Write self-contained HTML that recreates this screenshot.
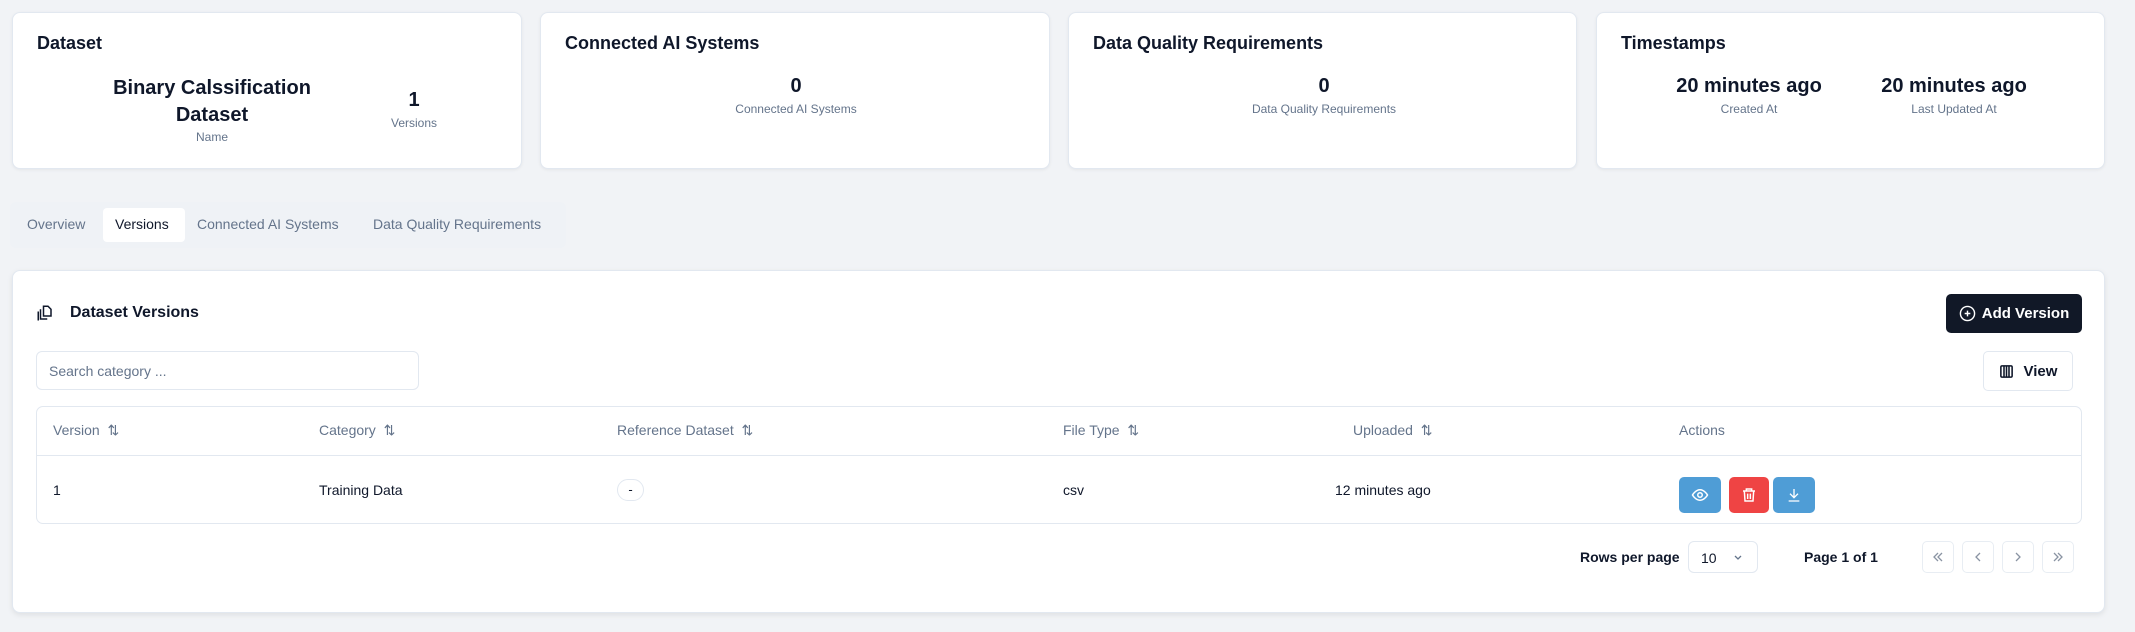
<!DOCTYPE html>
<html><head><meta charset="utf-8">
<style>
*{box-sizing:border-box;margin:0;padding:0}
body{width:2135px;height:632px;background:#f1f3f6;font-family:"Liberation Sans",sans-serif;color:#0f172a;position:relative;overflow:hidden}
.abs{position:absolute}
.card{position:absolute;top:12px;height:157px;background:#fff;border:1px solid #e2e8f0;border-radius:8px;box-shadow:0 1px 3px rgba(0,0,0,.06)}
.ct{position:absolute;left:24px;top:20px;font-size:18px;font-weight:bold}
.val{position:absolute;font-size:20px;font-weight:bold;text-align:center;transform:translateX(-50%);white-space:nowrap}
.lab{position:absolute;font-size:12px;color:#64748b;text-align:center;transform:translateX(-50%);white-space:nowrap}
.tab{position:absolute;top:216px;font-size:14px;color:#64748b}
.th{position:absolute;top:422px;font-size:14px;color:#64748b;white-space:nowrap}
.td{position:absolute;top:482px;font-size:14px;white-space:nowrap}
.btn{position:absolute;border-radius:5px;display:flex;align-items:center;justify-content:center}
.pg{position:absolute;top:541px;width:32px;height:32px;border:1px solid #e8edf3;border-radius:5px;display:flex;align-items:center;justify-content:center}
</style></head><body>
<div class="card" style="left:12px;width:510px">
 <div class="ct">Dataset</div>
 <div class="val" style="left:199px;top:62px;line-height:27px;white-space:normal;width:220px">Binary Calssification Dataset</div>
 <div class="lab" style="left:199px;top:117px">Name</div>
 <div class="val" style="left:401px;top:76px">1</div>
 <div class="lab" style="left:401px;top:103px">Versions</div>
</div>
<div class="card" style="left:540px;width:510px">
 <div class="ct">Connected AI Systems</div>
 <div class="val" style="left:255px;top:62px">0</div>
 <div class="lab" style="left:255px;top:89px">Connected AI Systems</div>
</div>
<div class="card" style="left:1068px;width:509px">
 <div class="ct">Data Quality Requirements</div>
 <div class="val" style="left:255px;top:62px">0</div>
 <div class="lab" style="left:255px;top:89px">Data Quality Requirements</div>
</div>
<div class="card" style="left:1596px;width:509px">
 <div class="ct">Timestamps</div>
 <div class="val" style="left:152px;top:62px">20 minutes ago</div>
 <div class="lab" style="left:152px;top:89px">Created At</div>
 <div class="val" style="left:357px;top:62px">20 minutes ago</div>
 <div class="lab" style="left:357px;top:89px">Last Updated At</div>
</div>

<div class="abs" style="left:10px;top:202px;width:556px;height:46px;background:#eff2f6;border-radius:6px"></div>
<div class="abs" style="left:103px;top:208px;width:82px;height:34px;background:#fff;border-radius:4px"></div>
<div class="tab" style="left:27px">Overview</div>
<div class="tab" style="left:115px;color:#0f172a">Versions</div>
<div class="tab" style="left:197px">Connected AI Systems</div>
<div class="tab" style="left:373px">Data Quality Requirements</div>

<div class="abs" style="left:12px;top:270px;width:2093px;height:343px;background:#fff;border:1px solid #e2e8f0;border-radius:8px;box-shadow:0 2px 6px rgba(0,0,0,.08)"></div>
<svg class="abs" style="left:36px;top:304px" width="18" height="18" viewBox="0 0 24 24" fill="none" stroke="#0f172a" stroke-width="2"><path d="M10 3h6l4 4v9h-10z"/><path d="M6 7v13h9" /><path d="M3 10v12" /></svg>
<div class="abs" style="left:70px;top:304px;font-size:16px;font-weight:bold">Dataset Versions</div>
<div class="btn" style="left:1946px;top:294px;width:136px;height:39px;background:#111827;color:#fff;font-size:15px;font-weight:bold">
 <svg width="17" height="17" viewBox="0 0 24 24" fill="none" stroke="#fff" stroke-width="2" style="margin-right:6px"><circle cx="12" cy="12" r="10"/><path d="M12 8v8M8 12h8"/></svg>Add Version</div>
<div class="btn" style="left:1983px;top:351px;width:90px;height:40px;border:1px solid #e2e8f0;font-size:15px;font-weight:bold">
 <svg width="15" height="15" viewBox="0 0 24 24" fill="none" stroke="#0f172a" stroke-width="2.5" style="margin-right:10px"><rect x="3" y="3" width="18" height="18" rx="2"/><path d="M8 3v18M12 3v18M16 3v18"/></svg>View</div>
<div class="abs" style="left:36px;top:351px;width:383px;height:39px;border:1px solid #e2e8f0;border-radius:6px;font-size:14px;color:#64748b;padding:11px 0 0 12px">Search category ...</div>

<div class="abs" style="left:36px;top:406px;width:2046px;height:118px;border:1px solid #e2e8f0;border-radius:7px"></div>
<div class="abs" style="left:37px;top:455px;width:2044px;height:1px;background:#e2e8f0"></div>
<div class="th" style="left:53px">Version &nbsp;⇅</div>
<div class="th" style="left:319px">Category &nbsp;⇅</div>
<div class="th" style="left:617px">Reference Dataset &nbsp;⇅</div>
<div class="th" style="left:1063px">File Type &nbsp;⇅</div>
<div class="th" style="left:1353px">Uploaded &nbsp;⇅</div>
<div class="th" style="left:1679px">Actions</div>
<div class="td" style="left:53px">1</div>
<div class="td" style="left:319px">Training Data</div>
<div class="abs" style="left:617px;top:479px;width:27px;height:22px;border:1px solid #e2e8f0;border-radius:11px;font-size:13px;text-align:center;line-height:19px">-</div>
<div class="td" style="left:1063px">csv</div>
<div class="td" style="left:1335px">12 minutes ago</div>
<div class="btn" style="left:1679px;top:477px;width:42px;height:36px;background:#4f9dd6">
 <svg width="18" height="18" viewBox="0 0 24 24" fill="none" stroke="#fff" stroke-width="2"><path d="M2 12s4-7 10-7 10 7 10 7-4 7-10 7S2 12 2 12z"/><circle cx="12" cy="12" r="3"/></svg></div>
<div class="btn" style="left:1729px;top:477px;width:40px;height:36px;background:#ef4444">
 <svg width="16" height="16" viewBox="0 0 24 24" fill="none" stroke="#fff" stroke-width="2.2"><path d="M3 6h18M8 6V3h8v3M5 6l1 15h12l1-15M10 10v8M14 10v8"/></svg></div>
<div class="btn" style="left:1773px;top:477px;width:42px;height:36px;background:#4f9dd6">
 <svg width="16" height="16" viewBox="0 0 24 24" fill="none" stroke="#fff" stroke-width="2"><path d="M12 3v13M6 10l6 6 6-6M4 21h16"/></svg></div>

<div class="abs" style="left:1580px;top:549px;font-size:14px;font-weight:bold">Rows per page</div>
<div class="abs" style="left:1688px;top:541px;width:70px;height:32px;border:1px solid #e2e8f0;border-radius:6px;font-size:14px;padding:8px 0 0 12px">10
 <svg style="position:absolute;left:44px;top:12px" width="10" height="7" viewBox="0 0 10 7" fill="none" stroke="#64748b" stroke-width="1.3"><path d="M2 2l3 3 3-3"/></svg></div>
<div class="abs" style="left:1804px;top:549px;font-size:14px;font-weight:bold">Page 1 of 1</div>
<div class="pg" style="left:1922px"><svg width="14" height="14" viewBox="0 0 14 14" fill="none" stroke="#8a94a3" stroke-width="1.3"><path d="M7 3L3 7l4 4M11 3L7 7l4 4"/></svg></div>
<div class="pg" style="left:1962px"><svg width="14" height="14" viewBox="0 0 14 14" fill="none" stroke="#8a94a3" stroke-width="1.3"><path d="M9 3L5 7l4 4"/></svg></div>
<div class="pg" style="left:2002px"><svg width="14" height="14" viewBox="0 0 14 14" fill="none" stroke="#8a94a3" stroke-width="1.3"><path d="M5 3l4 4-4 4"/></svg></div>
<div class="pg" style="left:2042px"><svg width="14" height="14" viewBox="0 0 14 14" fill="none" stroke="#8a94a3" stroke-width="1.3"><path d="M3 3l4 4-4 4M7 3l4 4-4 4"/></svg></div>
</body></html>
